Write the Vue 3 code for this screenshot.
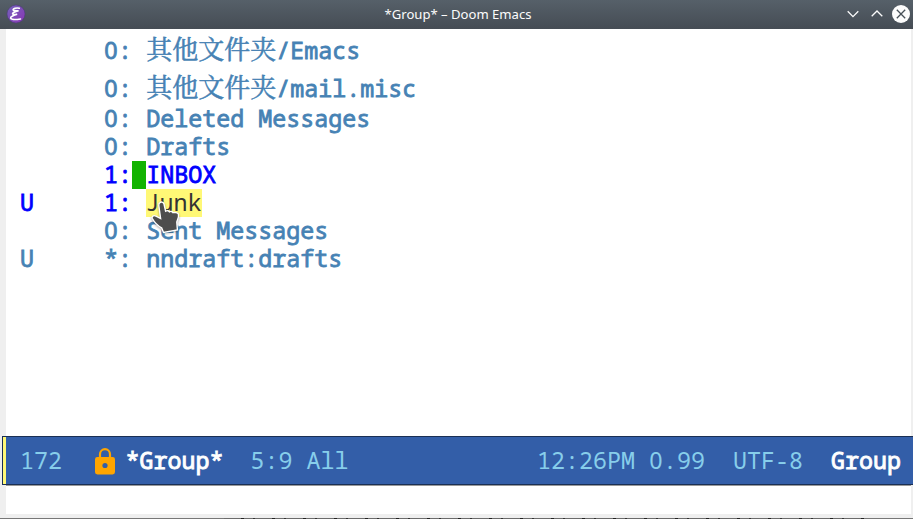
<script setup>
const groups = [
  { mark: ' ', count: '0', cjk: '其他文件夹', name: '/Emacs' },
  { mark: ' ', count: '0', cjk: '其他文件夹', name: '/mail.misc' },
  { mark: ' ', count: '0', name: 'Deleted Messages' },
  { mark: ' ', count: '0', name: 'Drafts' },
  { mark: ' ', count: '1', name: 'INBOX', unread: true, cursor: true },
  { mark: 'U', count: '1', name: 'Junk', unread: true, hover: true },
  { mark: ' ', count: '0', name: 'Sent Messages' },
  { mark: 'U', count: '*', name: 'nndraft:drafts' },
]
</script>

<template>
  <div class="window">
    <header class="titlebar">
      <svg class="logo" width="20" height="20" viewBox="0 0 20 20">
        <defs>
          <linearGradient id="lg" x1="0" y1="0" x2="1" y2="1">
            <stop offset="0" stop-color="#7464bd" /><stop offset="1" stop-color="#8a35b4" />
          </linearGradient>
        </defs>
        <circle cx="10" cy="10" r="9" fill="url(#lg)" stroke="#4b3c78" stroke-width=".6" />
        <path d="M13.3 4.2C10.5 3.4 6.4 4.7 7.2 6C7.8 6.9 10.2 6.9 12.6 6.8C9.5 7.6 5.6 9 6.8 10C7.6 10.6 9.4 10.5 11.2 10.3C8 11 4.2 12.8 4.6 14C5.2 15.8 10.8 15.6 14.5 15" fill="none" stroke="#fff" stroke-width="1.6" stroke-linecap="round" />
      </svg>
      <div class="title">*Group* – Doom Emacs</div>
      <div class="controls">
        <svg width="12" height="10" viewBox="0 0 12 10"><path d="M.7 2.3L6 7.6L11.3 2.3" /></svg>
        <svg width="12" height="10" viewBox="0 0 12 10"><path d="M.7 7.3L6 2L11.3 7.3" /></svg>
        <svg class="close" width="18" height="18" viewBox="0 0 18 18"><circle cx="9" cy="9" r="9" /><path d="M4.8 4.8L13.2 13.2M13.2 4.8L4.8 13.2" /></svg>
      </div>
    </header>
    <main class="buffer">
      <div v-for="g in groups" :key="g.cjk + g.name" class="row" :class="{ unread: g.unread, tall: g.cjk }">
        <span class="mark">{{ g.mark }}</span>
        <span class="count"><span class="digit" :class="{ zero: g.count === '0' }">{{ g.count }}</span>:</span>
        <span class="gap" :class="{ cursor: g.cursor }"></span>
        <span class="name" :class="{ hover: g.hover }"><span v-if="g.cjk" class="cjk">{{ g.cjk }}</span>{{ g.name }}</span>
      </div>
      <svg class="pointer" width="34" height="38" viewBox="0 0 34 38">
        <path d="M11.3 4.3C12.8 3.6 14.6 4.4 15 6L16.6 13.2C18 12.3 19.7 12.6 20.4 13.8C21.7 13 23.3 13.4 24 14.7C25.4 14.1 29 14.7 29.5 16.2C30 19.5 28.6 21 27.8 24L28.4 32L14.5 34.5L12.6 29.8C9.5 28.1 5.5 24.5 3.3 20.5C2.2 18.3 4.6 16.9 7 18.2L11.6 20.6L9.8 7.5C9.6 6 10.2 4.8 11.3 4.3Z" />
      </svg>
    </main>
    <footer class="modeline">
      <span class="size">172</span>
      <svg class="lock" width="20" height="27" viewBox="0 0 20 27">
        <path d="M5 10V6.2a5 5 0 0 1 10 0V10" fill="none" stroke="#ffa500" stroke-width="2.2" />
        <rect y="9" width="20" height="17.5" rx="2.4" fill="#ffa500" />
        <circle cx="10" cy="17.5" r="2.6" fill="#335ea8" />
      </svg>
      <span class="strong">*Group*</span>
      <span class="position">5:9 All</span>
      <span class="clock">12:26PM <span class="digit zero">0</span>.99</span>
      <span class="coding">UTF-8</span>
      <span class="strong">Group</span>
    </footer>
    <div class="echo"></div>
    <div class="behind"></div>
  </div>
</template>

<style>
body { margin: 0; overflow: hidden; }
</style>

<style scoped>
.window { width: 913px; height: 519px; display: flex; flex-direction: column; background: #efefef; overflow: hidden; font-family: "Noto Sans Mono", "DejaVu Sans Mono", monospace; font-size: 23.333px; }
.titlebar { height: 29px; box-sizing: border-box; flex: none; display: grid; grid-template-columns: 70px 1fr 70px; align-items: center; background: linear-gradient(#566069, #454c54); padding: 0 3px 1px 6px; }
.title { text-align: center; color: #fcfcfc; font: 13.1px/28px "Noto Sans", sans-serif; height: 28px; margin-top: -1px; }
.logo { display: block; }
.controls { display: flex; gap: 12px; align-items: center; justify-content: flex-end; }
.controls svg { flex: none; fill: none; stroke: #fcfcfc; stroke-width: 1.3; }
.controls .close { margin: 0 0 0 -3px; stroke: #475057; }
.close circle { fill: #fcfcfc; stroke: none; }
.buffer { position: relative; height: 407px; flex: none; margin: 0 2px 0 6px; background: #fff; }
.row { display: flex; height: 28px; padding-left: 14px; line-height: 26px; white-space: pre; color: #4682b4; -webkit-text-stroke: 0.8px currentColor; }
.row.tall { height: 38px; line-height: 42px; }
.unread { color: #0000ff; }
.mark { width: 84px; }
.count { width: 28px; }
.gap { width: 14px; }
.digit { display: inline-block; width: 14px; text-align: center; line-height: 1; }
.zero { font-family: "Noto Sans", sans-serif; font-size: 23.3px; }
.cursor { background: #12b300; }
.name { text-indent: .3px; }
.cjk { font-family: "Noto Serif CJK SC", "Noto Sans CJK SC", serif; font-size: 26px; line-height: 0; -webkit-text-stroke: 0.55px currentColor; }
.hover { width: 56px; text-indent: -.5px; background: #fff876; color: #333; -webkit-text-stroke: 0; }
.pointer { position: absolute; left: 143px; top: 169px; fill: #4d4d4d; stroke: #fff; stroke-width: 1.4; filter: drop-shadow(0 1px 1px #0005); }
.modeline { height: 49px; box-sizing: border-box; flex: none; display: flex; align-items: center; margin-left: 2px; padding: 0 12px 0 17px; line-height: 47px; white-space: pre; color: #87ceeb; background: #335ea8; border: 1px solid #1a2f54; border-right: 0; box-shadow: inset 3px 0 #fff876; }
.lock { margin: 2px 10.5px 0 33px; }
.strong { color: #fff; -webkit-text-stroke: 0.9px currentColor; }
.position { margin-left: 27px; }
.clock { margin-left: auto; }
.coding { margin: 0 28px; }
.echo { height: 29px; flex: none; margin: 0 2px 0 6px; background: #fff; border-top: 1px solid #999; box-sizing: border-box; }
.behind { height: 1px; flex: none; margin-top: 4px; background: repeating-linear-gradient(90deg, #6b6b6b 0 17px, #222 17px 20px, #6b6b6b 20px 29px, #333 29px 31px) 224px 0 / 640px 1px no-repeat, #777; }
</style>
